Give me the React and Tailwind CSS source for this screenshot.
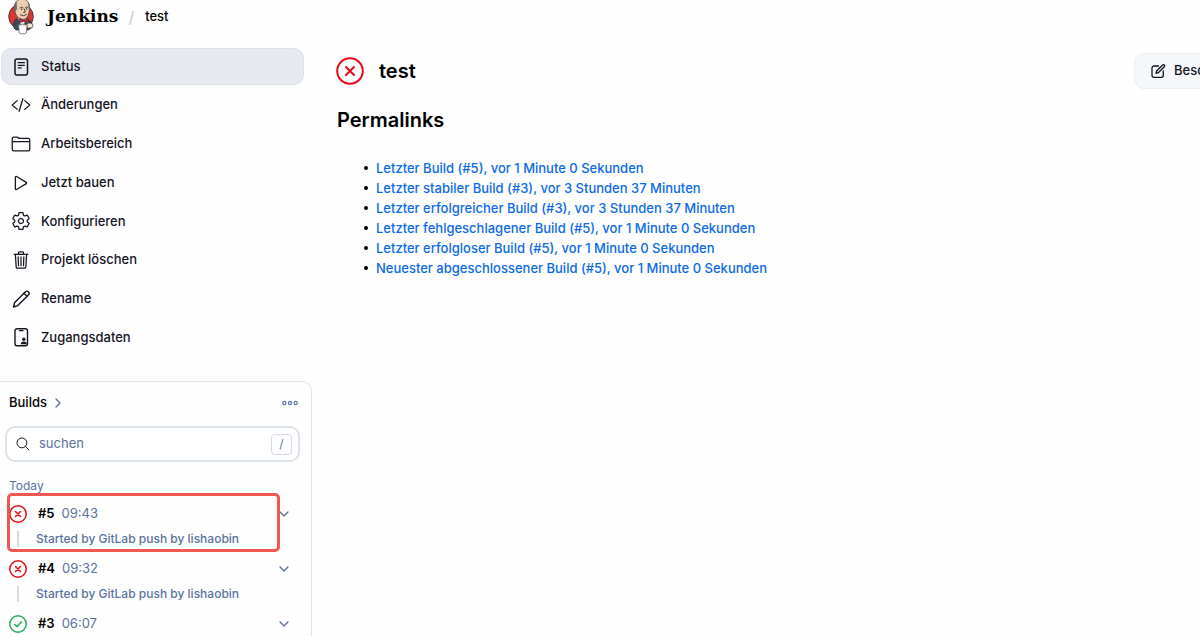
import React from "react";
import {
  IoCodeSlashOutline,
  IoFolderOutline,
  IoPlayOutline,
  IoSettingsOutline,
  IoTrashOutline,
  IoSearchOutline,
  IoChevronForwardOutline,
  IoChevronDownOutline,
} from "react-icons/io5";

function JenkinsLogo() {
  return (
    <svg viewBox="0 0 28 36" className="h-9 w-7 shrink-0" aria-hidden="true">
      <ellipse cx="14" cy="17.500" rx="12.300" ry="12.500" fill="#d33833" stroke="#3b2324" strokeWidth="0.8" />
      <path d="M7 29c-1-4 0-7 2-9l12 .5c3.500 1.500 5 4.500 4.500 7.500l-4 3H9z" fill="#335061" stroke="#1d2a33" strokeWidth="0.7" />
      <path d="M11 19l4 9 5-8z" fill="#f7f4ef" />
      <path d="M7.500 8C7.500 3 10.500 0 15 0s7.500 3 7.500 8.500c0 6-2 12-6.500 12-4.500 0-8.500-4-8.500-12.500z" fill="#e9cfb2" stroke="#4a3b36" strokeWidth="0.8" />
      <path d="M8.500 12C6.800 11 6.500 5 9.700 2.700c.6 2-.4 3.700.3 5.600.4 1.300-.2 2.700-1.500 3.700z" fill="#6d6b6d" />
      <path d="M21.500 3.500c1.400 1.900 1.700 4.500 1 7.500l-1.200-3z" fill="#6d6b6d" />
      <path d="M13 8.800q1.700-1.400 3.200 0M18.500 8.500q1.300-1.200 2.500 0M17.300 10l.9 3.200-1.600.3M13.500 16q3 1.800 6-.4" fill="none" stroke="#4a3027" strokeWidth="0.9" strokeLinecap="round" />
      <circle cx="14.700" cy="10.200" r=".7" fill="#28201e" />
      <circle cx="19.700" cy="10" r=".7" fill="#28201e" />
      <path d="M16.500 21l-4-1.800-.3 4.500 4.200-1.200 5 2 .4-4.700z" fill="#b32b38" stroke="#45202b" strokeWidth="0.5" />
      <path d="M20 24.500c2.500-1 5-.3 6 1.500.6 1.800-1 3-3 3h-3z" fill="#f4e6d6" stroke="#4a3b36" strokeWidth="0.7" />
      <path d="M11.500 26c2.500-1 6-1 8.500 0l-.6 8c-1.900 1.200-5.200 1.200-7.200 0z" fill="#fff" stroke="#5b5550" strokeWidth="0.7" />
      <path d="M12 26.500q4 1 7.500 0" fill="none" stroke="#bcb5ad" strokeWidth="0.6" />
    </svg>
  );
}

function DocumentIcon({ className }) {
  return (
    <svg viewBox="0 0 20 20" className={className} fill="none" stroke="currentColor" strokeWidth="1.500" strokeLinecap="round">
      <rect x="4" y="2" width="12.500" height="16" rx="2" />
      <path d="M7.200 5.700h6.200M7.200 8.300h6.200M7.200 10.900h3" strokeWidth="1.300" />
    </svg>
  );
}

function PencilIcon({ className }) {
  return (
    <svg viewBox="0 0 20 20" className={className} fill="none" stroke="currentColor" strokeWidth="1.400" strokeLinecap="round" strokeLinejoin="round">
      <path d="M2.500 18l1.200-4.500L14.500 2.700a1.900 1.900 0 0 1 2.700 0l.4.4a1.900 1.900 0 0 1 0 2.700L6.800 16.600z" />
      <path d="M13 4.200l3.200 3.200" />
    </svg>
  );
}

function BadgeIcon({ className }) {
  return (
    <svg viewBox="0 0 20 20" className={className} fill="none" stroke="currentColor" strokeWidth="1.400" strokeLinecap="round">
      <rect x="4" y="1.700" width="12.500" height="17" rx="2" />
      <path d="M8.500 3.700h3.500" strokeWidth="1.300" />
      <circle cx="12.800" cy="12.300" r="1.700" fill="currentColor" stroke="none" />
      <path d="M9.800 17.200c0-1.800 1.300-2.600 3-2.600s3 .8 3 2.600z" fill="currentColor" stroke="none" />
    </svg>
  );
}

function EditIcon({ className }) {
  return (
    <svg viewBox="0 0 16 16" className={className} fill="none" stroke="currentColor" strokeWidth="1.300" strokeLinecap="round" strokeLinejoin="round">
      <path d="M8.500 3H4a2 2 0 0 0-2 2v7.300a2 2 0 0 0 2 2h7.300a2 2 0 0 0 2-2V8" />
      <path d="M6 10.300l.6-2.300 6-6a1.200 1.200 0 0 1 1.700 1.700l-6 6z" />
    </svg>
  );
}

function FailedIcon({ className }) {
  return (
    <svg viewBox="0 0 28 28" className={className} fill="none" stroke="#e60a14" strokeWidth="2" strokeLinecap="round">
      <circle cx="14" cy="14" r="12.800" />
      <path d="M10 10l8 8M18 10l-8 8" />
    </svg>
  );
}

function SmallFailedIcon() {
  return (
    <svg viewBox="0 0 18 18" className="size-[18px]" fill="none" stroke="#e60a14" strokeWidth="1.500" strokeLinecap="round" role="img" aria-label="Fehlgeschlagen">
      <circle cx="9" cy="9" r="8.200" />
      <path d="M6.500 6.500l5 5M11.500 6.500l-5 5" />
    </svg>
  );
}

function SuccessIcon() {
  return (
    <svg viewBox="0 0 18 18" className="size-[18px]" fill="none" stroke="#1eb055" strokeWidth="1.500" strokeLinecap="round" strokeLinejoin="round" role="img" aria-label="Erfolgreich">
      <circle cx="9" cy="9" r="8.200" />
      <path d="M5.800 9.500l2.200 2.200 4.300-5" />
    </svg>
  );
}

const navItems = [
  { label: "Status", Icon: DocumentIcon, active: true },
  { label: "Änderungen", Icon: IoCodeSlashOutline },
  { label: "Arbeitsbereich", Icon: IoFolderOutline },
  { label: "Jetzt bauen", Icon: IoPlayOutline },
  { label: "Konfigurieren", Icon: IoSettingsOutline },
  { label: "Projekt löschen", Icon: IoTrashOutline },
  { label: "Rename", Icon: PencilIcon },
  { label: "Zugangsdaten", Icon: BadgeIcon },
];

const permalinks = [
  "Letzter Build (#5), vor 1 Minute 0 Sekunden",
  "Letzter stabiler Build (#3), vor 3 Stunden 37 Minuten",
  "Letzter erfolgreicher Build (#3), vor 3 Stunden 37 Minuten",
  "Letzter fehlgeschlagener Build (#5), vor 1 Minute 0 Sekunden",
  "Letzter erfolgloser Build (#5), vor 1 Minute 0 Sekunden",
  "Neuester abgeschlossener Build (#5), vor 1 Minute 0 Sekunden",
];

const builds = [
  { id: "#5", time: "09:43", cause: "Started by GitLab push by lishaobin", marked: true },
  { id: "#4", time: "09:32", cause: "Started by GitLab push by lishaobin" },
  { id: "#3", time: "06:07", ok: true },
];

function BuildRow({ build }) {
  return (
    <li className="relative pl-[9px] pr-5">
      <div className="flex h-[30px] items-center">
        {build.ok ? <SuccessIcon /> : <SmallFailedIcon />}
        <a href="#build" className="ml-[11px] font-semibold text-black">{build.id}</a>
        <span className="ml-[7px] text-[#5a72a0]">{build.time}</span>
        <button type="button" aria-label={"Menü für Build " + build.id} className="ml-auto text-[#5a6f96]">
          <IoChevronDownOutline className="size-[14px]" />
        </button>
      </div>
      {build.cause && (
        <div className="flex h-[25px] items-start text-[12px] font-medium leading-5 text-[#5a72a0]">
          <span className="ml-2 mr-[17px] mt-[2px] h-4 w-[2px] bg-[#d5dae2]" />
          {build.cause}
        </div>
      )}
      {build.marked && (
        <div className="pointer-events-none absolute -top-[6px] left-[7px] h-[59px] w-[273px] rounded-[5px] border-3 border-[#ee5850]" />
      )}
    </li>
  );
}

export default function App() {
  return (
    <div className="h-screen overflow-hidden bg-[#fefefe] font-['Inter',sans-serif] text-[13px] text-[#14141f]">
      <header className="flex h-[34px] items-center pl-[7px]">
        <a href="#home" className="flex items-center text-black">
          <JenkinsLogo />
          <span className="ml-3 font-['DejaVu_Serif',serif] text-[17px] font-bold">Jenkins</span>
        </a>
        <span className="ml-[10px] text-[16px] text-[#c5c9d2]">/</span>
        <a href="#test" className="ml-[11px] font-medium text-black">test</a>
      </header>
      <div className="flex pt-[14px]">
        <aside className="w-[312px] shrink-0">
          <nav className="flex h-[308px] flex-col justify-between pl-px pr-2 font-medium">
            {navItems.map(({ label, Icon, active }) => (
              <a
                key={label}
                href="#nav"
                className={
                  active
                    ? "flex h-[37px] items-center gap-[10px] rounded-[10px] border border-[#dde1e8] bg-[#e6eaf0] pl-[9px]"
                    : "flex h-[37px] items-center gap-[10px] rounded-[10px] border border-transparent pl-[9px]"
                }
              >
                <Icon className="size-5 shrink-0" />
                {label}
              </a>
            ))}
          </nav>
          <section className="mt-[25px] rounded-tr-[10px] border-r border-t border-[#e0e4ea]">
            <div className="flex h-11 items-center pb-[2px] pl-[9px] pr-[13px]">
              <a href="#builds" className="flex items-center gap-1 font-medium text-black">
                Builds
                <IoChevronForwardOutline className="size-[14px] text-[#5a6f96]" />
              </a>
              <button type="button" aria-label="Mehr" className="ml-auto text-[#5a72a0]">
                <svg viewBox="0 0 16 6" className="h-[6px] w-4" fill="none" stroke="currentColor" strokeWidth="1.200">
                  <circle cx="2.300" cy="3" r="1.600" />
                  <circle cx="8" cy="3" r="1.600" />
                  <circle cx="13.700" cy="3" r="1.600" />
                </svg>
              </button>
            </div>
            <label className="ml-[5px] mr-[11px] flex h-9 items-center rounded-[10px] border-2 border-[#dce3ea] bg-white pl-2 pr-[6px]">
              <IoSearchOutline className="size-4 shrink-0" />
              <input
                type="text"
                aria-label="suchen"
                placeholder="suchen"
                className="ml-2 min-w-0 flex-1 bg-transparent outline-none placeholder:text-[#5a72a0]"
              />
              <kbd className="flex h-[21px] w-[21px] items-center justify-center rounded-[4px] border border-[#d3dae4] font-['Inter',sans-serif] text-[12px] text-[#5a72a0]">/</kbd>
            </label>
            <h2 className="mt-4 h-4 pl-[9px] text-[12px] leading-4 text-[#5a72a0]">Today</h2>
            <ul className="mt-[5px]">
              {builds.map((b) => (
                <BuildRow key={b.id} build={b} />
              ))}
            </ul>
          </section>
        </aside>
        <main className="min-w-0 flex-1 pl-6">
          <div className="flex h-[46px] items-center">
            <FailedIcon className="size-7 shrink-0" />
            <h1 className="ml-[15px] text-[20px] font-semibold text-black">test</h1>
            <button type="button" className="-mr-[90px] ml-auto flex h-9 w-[156px] shrink-0 items-center gap-2 whitespace-nowrap rounded-[10px] border border-[#eceff4] bg-[#f5f7fa] pl-[15px] font-medium">
              <EditIcon className="size-4 shrink-0" />
              Beschreibung
            </button>
          </div>
          <h2 className="mt-3 pl-px text-[20px] font-semibold leading-7 text-black">Permalinks</h2>
          <ul className="mt-6 pl-7 font-medium leading-5 text-black">
            {permalinks.map((p) => (
              <li key={p} className="flex items-center gap-2 before:size-1 before:rounded-full before:bg-black before:content-['']">
                <a href="#permalink" className="text-[#0b6ae6]">{p}</a>
              </li>
            ))}
          </ul>
        </main>
      </div>
    </div>
  );
}
